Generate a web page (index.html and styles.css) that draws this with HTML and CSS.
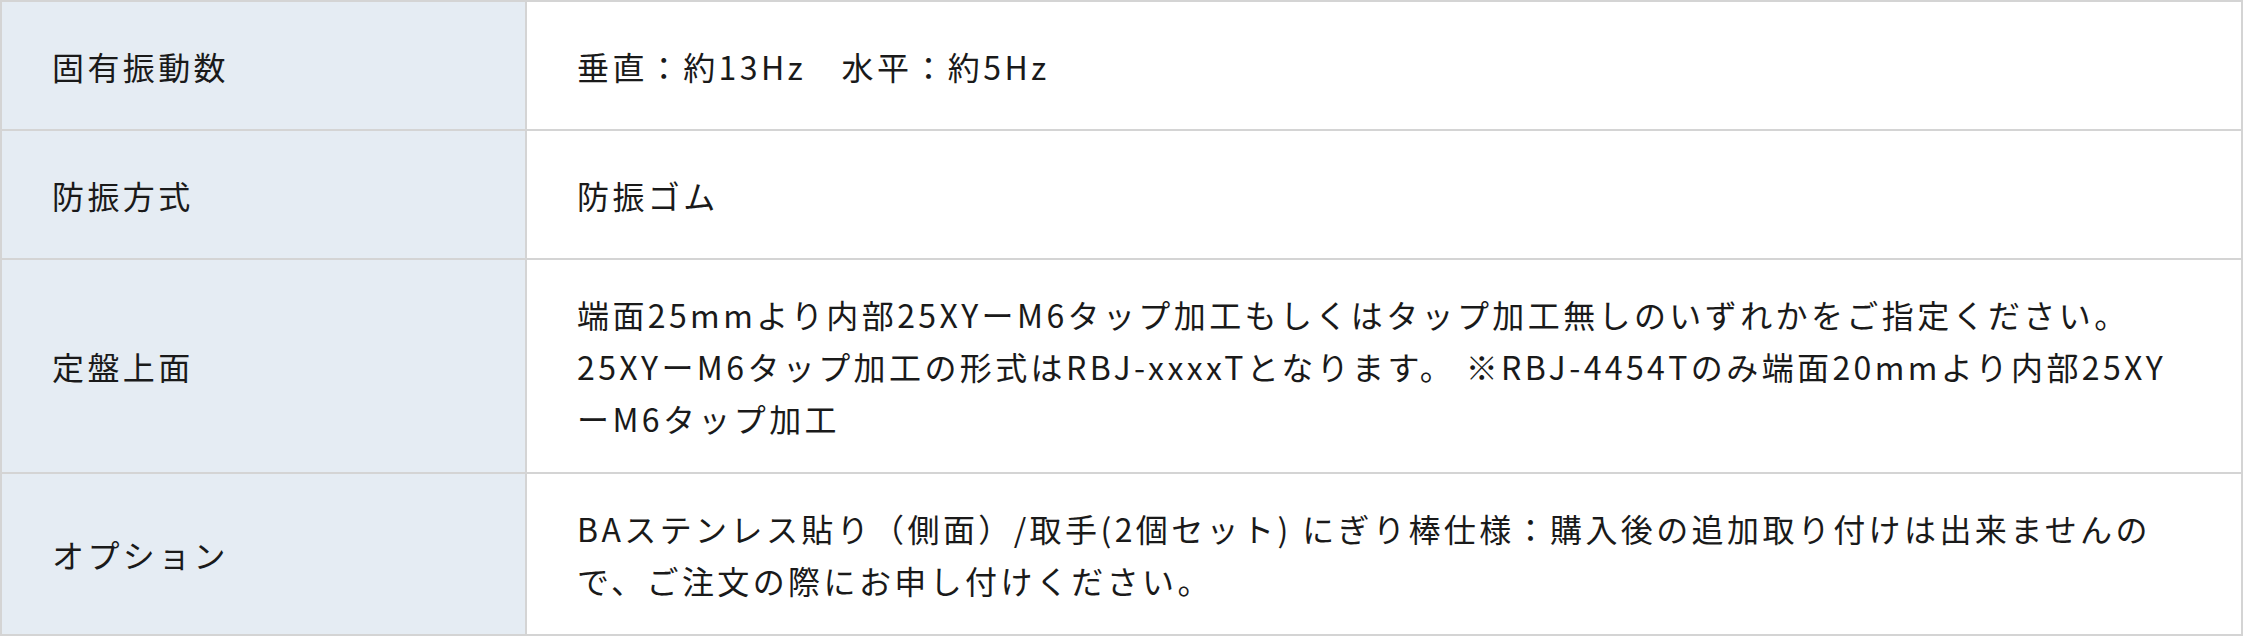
FILE: index.html
```html
<!DOCTYPE html>
<html lang="ja">
<head>
    <meta charset="UTF-8">
    <meta name="viewport" content="width=device-width, initial-scale=1.0">
    <title>仕様</title>
    <link rel="stylesheet" href="styles.css">
</head>
<body>
    <table class="spec">
        <tr>
            <th>固有振動数</th>
            <td>垂直：約13Hz　水平：約5Hz</td>
        </tr>
        <tr>
            <th>防振方式</th>
            <td>防振ゴム</td>
        </tr>
        <tr>
            <th>定盤上面</th>
            <td>端面25mmより内部25XYーM6タップ加工もしくはタップ加工無しのいずれかをご指定ください。<br>25XYーM6タップ加工の形式はRBJ-xxxxTとなります。 ※RBJ-4454Tのみ端面20mmより内部25XYーM6タップ加工</td>
        </tr>
        <tr>
            <th>オプション</th>
            <td>BAステンレス貼り（側面）/取手(2個セット) にぎり棒仕様：購入後の追加取り付けは出来ませんので、ご注文の際にお申し付けください。</td>
        </tr>
    </table>
</body>
</html>
```

FILE: styles.css
```css
* {
    margin: 0;
    padding: 0;
    box-sizing: border-box;
}

body {
    background-color: #fff;
    color: #1a1a1a;
    font-family: "Noto Sans CJK JP", "Noto Sans", sans-serif;
}

.spec {
    width: 100%;
    border-collapse: collapse;
    font-size: 32px;
    line-height: 52px;
    letter-spacing: 3.4px;

    th, td {
        height: 129px;
        border: 2px solid #d4d4d4;
        padding: 28px 50px;
        text-align: left;
        vertical-align: middle;
        font-weight: normal;
    }

    th {
        width: 525px;
        background-color: #e5ecf3;
    }
}
```
